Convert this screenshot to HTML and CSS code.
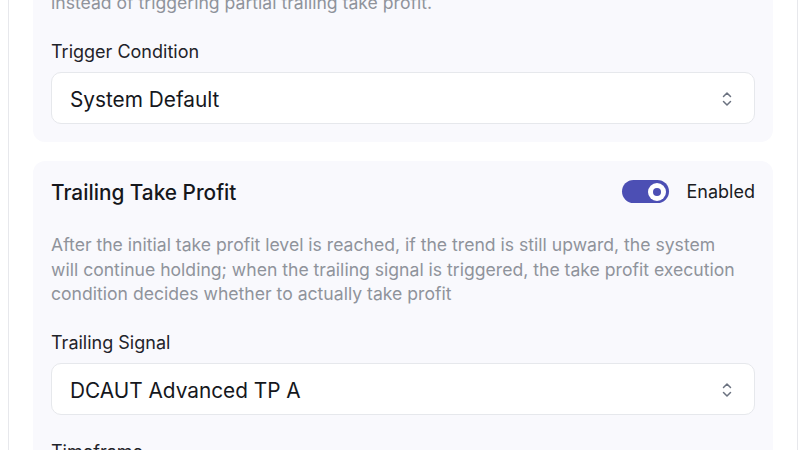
FILE: index.html
```html
<!doctype html>
<html>
    <head>
        <meta name="viewport" content="width=device-width, initial-scale=1">
        <title>Take Profit Settings</title>
        <link rel="stylesheet" href="styles.css">
    </head>
    <body>
        <div class="panel">
            <div class="section">
                <p class="desc">instead of triggering partial trailing take profit.</p>
                <div class="field">
                    <label class="label">Trigger Condition</label>
                    <div class="select">
                        <span>System Default</span>
                        <svg class="chevrons" width="12" height="18" viewBox="0 0 12 18"><path d="M2.5 6.5 6 3l3.5 3.5M2.5 11.5 6 15l3.5-3.5" fill="none" stroke="#6b7280" stroke-width="1.5" stroke-linecap="round" stroke-linejoin="round"/></svg>
                    </div>
                </div>
            </div>
            <div class="section">
                <div class="section-head">
                    <h3>Trailing Take Profit</h3>
                    <div class="switch-wrap">
                        <span class="switch"><span class="knob"></span></span>
                        <span class="switch-label">Enabled</span>
                    </div>
                </div>
                <p class="desc first">After the initial take profit level is reached, if the trend is still upward, the system will continue holding; when the trailing signal is triggered, the take profit execution condition decides whether to actually take profit</p>
                <div class="field">
                    <label class="label">Trailing Signal</label>
                    <div class="select">
                        <span>DCAUT Advanced TP A</span>
                        <svg class="chevrons" width="12" height="18" viewBox="0 0 12 18"><path d="M2.5 6.5 6 3l3.5 3.5M2.5 11.5 6 15l3.5-3.5" fill="none" stroke="#6b7280" stroke-width="1.5" stroke-linecap="round" stroke-linejoin="round"/></svg>
                    </div>
                </div>
                <div class="field">
                    <label class="label">Timeframe</label>
                    <div class="select">
                        <span>1 Hour</span>
                    </div>
                </div>
            </div>
        </div>
    </body>
</html>
```

FILE: styles.css
```css
body {
    margin: 0;
    background-color: #fff;
    font-family: 'Inter', 'Noto Sans', sans-serif;
    color: #1f2329;
    overflow: hidden;
}
.panel {
    margin: -27px 1px 0 8px;
    border-left: 1px solid #e7e8ec;
    border-right: 1px solid #e7e8ec;
    padding: 0 24px;
}
.section {
    background-color: #f9f9fd;
    border-radius: 12px;
    padding: 18px;
    margin-bottom: 19px;
}
.section-head {
    display: flex;
    align-items: center;
    justify-content: space-between;
    min-height: 24px;
}
h3 {
    margin: 0;
    font-size: 20.8px;
    font-weight: 500;
    color: #15171c;
    position: relative;
    top: 1px;
}
.switch-wrap {
    display: flex;
    align-items: center;
}
.switch {
    display: flex;
    align-items: center;
    justify-content: flex-end;
    width: 47px;
    height: 23px;
    border-radius: 12px;
    background-color: #4c4fb4;
    padding: 0 3px;
    box-sizing: border-box;
}
.knob {
    width: 18px;
    height: 18px;
    border-radius: 50%;
    background-color: #fff;
    display: flex;
    align-items: center;
    justify-content: center;
}
.knob::after {
    content: "";
    width: 8px;
    height: 8px;
    border-radius: 50%;
    background-color: #4c4fb4;
}
.switch-label {
    margin-left: 18px;
    font-size: 18px;
    color: #1a1c22;
}
.desc {
    margin: 0;
    font-size: 17.6px;
    line-height: 24.3px;
    color: #8f939b;
}
.desc.first {
    margin-top: 29px;
    padding-right: 12px;
}
.field {
    margin-top: 25px;
}
.label {
    display: block;
    font-size: 18px;
    line-height: 24px;
    margin-bottom: 8px;
    color: #1f2329;
}
.select {
    display: flex;
    align-items: center;
    justify-content: space-between;
    height: 52px;
    box-sizing: border-box;
    background-color: #fff;
    border: 1px solid #e6e8ec;
    border-radius: 10px;
    padding: 2px 21px 0 18px;
    font-size: 20.8px;
    color: #15171c;
}
.chevrons {
    display: block;
}
```
